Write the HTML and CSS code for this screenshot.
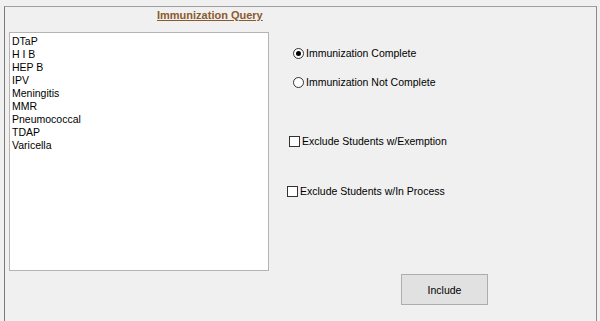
FILE: index.html
```html
<!DOCTYPE html>
<html>
<head>
<meta charset="utf-8">
<link rel="stylesheet" href="styles.css">
</head>
<body>
<div class="frame">
  <div class="left">
    <div class="title">Immunization Query</div>
    <div class="listbox">
      <div class="item">DTaP</div>
      <div class="item">H I B</div>
      <div class="item">HEP B</div>
      <div class="item">IPV</div>
      <div class="item">Meningitis</div>
      <div class="item">MMR</div>
      <div class="item">Pneumococcal</div>
      <div class="item">TDAP</div>
      <div class="item">Varicella</div>
    </div>
  </div>
  <div class="right">
    <div class="opt radio-opt r1"><span class="radio checked"></span><span>Immunization Complete</span></div>
    <div class="opt radio-opt r2"><span class="radio"></span><span>Immunization Not Complete</span></div>
    <div class="opt check-opt c1"><span class="check"></span><span>Exclude Students w/Exemption</span></div>
    <div class="opt check-opt c2"><span class="check"></span><span>Exclude Students w/In Process</span></div>
    <div class="btnrow"><button class="btn">Include</button></div>
  </div>
</div>
</body>
</html>
```

FILE: styles.css
```css
html, body {
  margin: 0;
  padding: 0;
  background: #f0f0f0;
  font-family: "Liberation Sans", Arial, sans-serif;
  font-size: 10.5px;
  color: #000;
  overflow: hidden;
}
.frame {
  margin: 6px 3px 0 4px;
  height: 320px;
  border-top: 1px solid #a0a0a0;
  border-left: 1px solid #7a7a7a;
  border-right: 1px solid #8a8a8a;
  display: flex;
}
.left {
  width: 266px;
  flex: none;
}
.title {
  margin: 2px 0 0 152px;
  font-size: 11px;
  font-weight: bold;
  color: #8a5a2c;
  text-decoration: underline;
  line-height: 13px;
  height: 13px;
}
.listbox {
  margin: 10px 0 0 4px;
  width: 260px;
  height: 239px;
  background: #fff;
  border: 1px solid #b4b4b4;
  padding: 2px 0 0 2px;
  box-sizing: border-box;
}
.item {
  line-height: 13px;
  height: 13px;
}
.right {
  flex: 1;
  display: flex;
  flex-direction: column;
}
.opt {
  display: flex;
  align-items: center;
  gap: 2px;
  height: 14px;
  line-height: 14px;
}
.r1 { margin: 39px 0 0 22px; }
.r2 { margin: 15px 0 0 22px; }
.c1 { margin: 45px 0 0 18px; }
.c2 { margin: 36px 0 0 16px; }
.radio {
  width: 11px;
  height: 11px;
  border: 1px solid #333;
  border-radius: 50%;
  background: #fff;
  box-sizing: border-box;
  display: flex;
  align-items: center;
  justify-content: center;
}
.radio.checked::after {
  content: "";
  width: 5px;
  height: 5px;
  border-radius: 50%;
  background: #000;
}
.check {
  width: 11px;
  height: 11px;
  border: 1px solid #333;
  background: #fff;
  box-sizing: border-box;
}
.btnrow {
  margin: 76px 0 0 130px;
}
.btn {
  width: 87px;
  height: 31px;
  background: #e1e1e1;
  border: 1px solid #adadad;
  font-family: "Liberation Sans", Arial, sans-serif;
  font-size: 10.5px;
  color: #000;
  padding: 0;
}
```
